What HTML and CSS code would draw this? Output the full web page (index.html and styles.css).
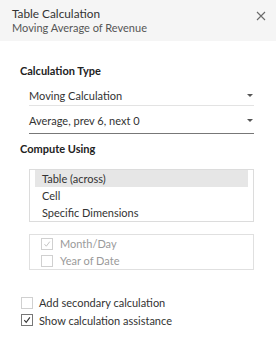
FILE: index.html
```html
<!DOCTYPE html>
<html>
<head>
<meta charset="utf-8">
<link rel="stylesheet" href="styles.css">
</head>
<body>
<div class="dialog">
  <div class="header">
    <div class="titles">
      <div class="title">Table Calculation</div>
      <div class="subtitle">Moving Average of Revenue</div>
    </div>
    <svg class="close" width="10" height="10" viewBox="0 0 10 10"><path d="M1 1 L9 9 M9 1 L1 9" stroke="#6a6a6a" stroke-width="1.1" fill="none"/></svg>
  </div>
  <div class="content">
    <div class="heading h1">Calculation Type</div>
    <div class="select s1"><span>Moving Calculation</span><span class="arrow"></span></div>
    <div class="select s2"><span>Average, prev 6, next 0</span><span class="arrow"></span></div>
    <div class="heading h2">Compute Using</div>
    <div class="listbox">
      <div class="item selected">Table (across)</div>
      <div class="item">Cell</div>
      <div class="item">Specific Dimensions</div>
    </div>
    <div class="dimbox">
      <div class="check-row disabled"><span class="box checked"><svg width="10" height="10" viewBox="0 0 10 10"><path d="M2.5 5.2 L4.3 7.2 L7.8 2.6" stroke="#c4c4c4" stroke-width="1" fill="none"/></svg></span><span>Month/Day</span></div>
      <div class="check-row disabled"><span class="box"></span><span>Year of Date</span></div>
    </div>
    <div class="options">
      <div class="check-row"><span class="box light"></span><span>Add secondary calculation</span></div>
      <div class="check-row"><span class="box dark"><svg width="10" height="10" viewBox="0 0 10 10"><path d="M2.3 5.2 L4.2 7.4 L7.9 2.4" stroke="#333" stroke-width="1.1" fill="none"/></svg></span><span>Show calculation assistance</span></div>
    </div>
  </div>
</div>
</body>
</html>
```
FILE: styles.css
```css
* { box-sizing: border-box; }
html, body { margin: 0; padding: 0; background: #fff; }
body { font-family: Lato, "Open Sans", sans-serif; font-size: 11px; color: #333; width: 276px; height: 341px; }
.header { background: #f5f5f5; height: 41px; display: flex; justify-content: space-between; align-items: flex-start; padding: 7px 10px 0 12px; font-size: 11.8px; }
.title { line-height: 14px; color: #333; }
.subtitle { line-height: 14px; color: #555; font-size: 11px; }
.close { margin-top: 4px; }
.content { padding: 0 22px 0 20px; }
.heading { font-weight: bold; font-size: 11px; line-height: 14px; color: #222; }
.h1 { margin-top: 23px; }
.select { margin-left: 9px; display: flex; justify-content: space-between; align-items: center; line-height: 19px; }
.s1 { margin-top: 8px; border-bottom: 1px solid #e3e3e3; }
.s2 { padding-top: 5px; padding-bottom: 3px; border-bottom: 1px solid #777; }
.arrow { width: 0; height: 0; border-left: 3px solid transparent; border-right: 3px solid transparent; border-top: 3px solid #555; margin-right: 1px; }
.h2 { margin-top: 8px; }
.listbox { margin: 13px 0 0 9px; border: 1px solid #dcdcdc; padding: 0 5px; }
.item { line-height: 17px; height: 17px; padding-left: 7px; }
.item.selected { background: #e6e6e6; }
.dimbox { margin: 12px 0 0 9px; border: 1px solid #e0e0e0; padding: 0 11px; }
.check-row { display: flex; align-items: center; height: 17px; }
.check-row .box { width: 12px; height: 12px; border: 1px solid #d0d0d0; margin-right: 7px; display: flex; align-items: center; justify-content: center; background: #fff; flex: none; }
.check-row.disabled { color: #9a9a9a; }
.options { margin-top: 24px; padding-left: 1px; }
.options .check-row { height: 17.5px; }
.options .box { margin-right: 6px; }
.options .box.light { border-color: #d0d0d0; }
.options .box.dark { border-color: #777; }
```
